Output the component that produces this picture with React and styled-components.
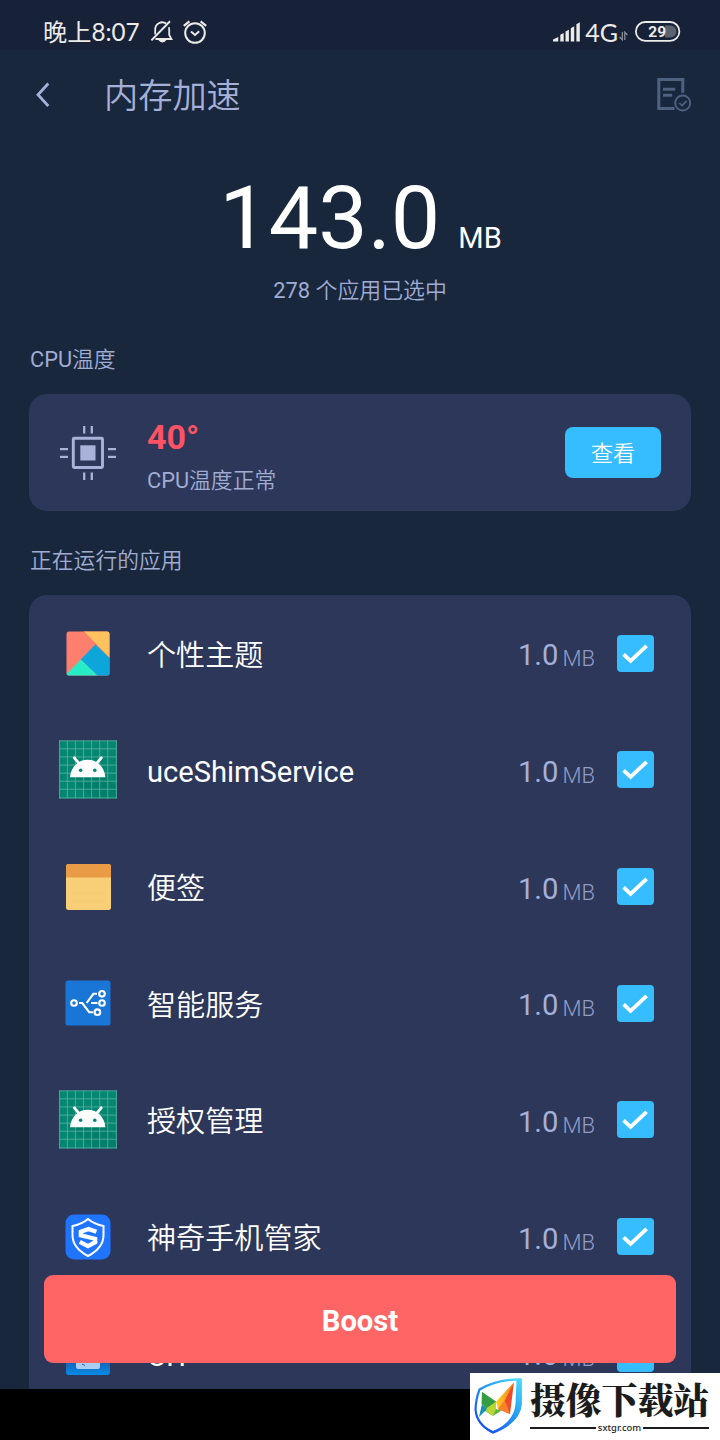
import React from 'react';
import styled, { createGlobalStyle } from 'styled-components';

const GlobalStyle = createGlobalStyle`
  * {
    box-sizing: border-box;
  }

  body {
    margin: 0;
    background: #000;
    font-family: Roboto, 'Noto Sans CJK SC DemiLight', 'Noto Sans CJK SC', sans-serif;
  }

  svg {
    display: block;
  }
`;

const BellOffIcon = () => (
  <svg width="24" height="24" viewBox="0 0 24 24" fill="none" stroke="#ecebe8" strokeWidth="1.8">
    <path d="M5.2 14.5V9.6a7 7 0 0 1 11-6M18.8 7.2c.3.8.4 1.6.4 2.4v5.2l2.2 4.2H5.5" />
    <path d="M20 1.2 1.4 20.4" strokeWidth="2" />
    <path d="M8.4 20h8q-1.4 2.4-4 2.4T8.4 20z" fill="#ecebe8" stroke="none" />
  </svg>
);

const AlarmIcon = () => (
  <svg width="24" height="24" viewBox="0 0 24 24" fill="none" stroke="#ecebe8" strokeWidth="2">
    <circle cx="12" cy="13" r="9.8" />
    <path d="M.8 5.8 6.4 1.4M23.2 5.8 17.6 1.4" strokeWidth="2.2" />
    <path d="M8 11.4 12 15l4.2-3.8" />
  </svg>
);

const SignalIcon = () => (
  <svg width="28" height="20" viewBox="0 0 28 20" fill="#ecebe8">
    <path d="M0 19.5v-2L5.3 15v4.5zM7.3 19.5v-6.7l3.4-1.7v8.4zM12.5 19.5v-10l3.4-1.8v11.8zM17.8 19.5V6.2l3.4-2v15.3zM23.4 19.5V2.2l3.4-2v19.3z" />
  </svg>
);

const DataIcon = () => (
  <svg width="9" height="10" viewBox="0 0 9 10" fill="none" stroke="#8e939d" strokeWidth="1.2">
    <path d="M3.3 1v7.8L.6 6M5.8 9V1.2L8.4 4" />
  </svg>
);

const BatteryIcon = () => (
  <svg width="46" height="21" viewBox="0 0 46 21">
    <path d="M30 4.5h5.5a6 6 0 0 1 0 12H30z" fill="#5b6270" />
    <rect x="0.9" y="1" width="43.5" height="18.8" rx="9.4" fill="none" stroke="#ecebe8" strokeWidth="1.8" />
    <text x="22.2" y="15.9" textAnchor="middle" fontSize="15.5" fontWeight="700" fill="#ecebe8">29</text>
  </svg>
);

const BackIcon = () => (
  <svg width="15" height="26" viewBox="0 0 15 26" fill="none" stroke="#a5b0d8" strokeWidth="2.8">
    <path d="M13.3 1.5 3 12.8 13.3 24" />
  </svg>
);

const ReportIcon = () => (
  <svg width="36" height="36" viewBox="0 0 36 36" fill="none" stroke="#4d6280">
    <path d="M18.5 31.4H2.8V2.4h24v13.4" strokeWidth="3" />
    <path d="M7 12.2h12.2M7 18.2h9.2" strokeWidth="3" />
    <circle cx="26.7" cy="26" r="7.5" strokeWidth="1.9" />
    <path d="m23.4 26 2.7 2.6 4.5-4.7" strokeWidth="1.7" />
  </svg>
);

const CpuIcon = () => (
  <svg width="58" height="58" viewBox="0 0 58 58" fill="none" stroke="#a9b3d9">
    <rect x="14.3" y="14.3" width="29.2" height="29.2" rx="1" strokeWidth="2.9" />
    <rect x="21.3" y="21.3" width="15.2" height="15.2" fill="#a9b3d9" stroke="none" />
    <path
      d="M25.2 2v7.6M32.8 2v7.6M25.2 48.4V56M32.8 48.4V56M1 25.2h8M1 32.8h8M49 25.2h8M49 32.8h8"
      strokeWidth="2.3"
    />
  </svg>
);

const CheckIcon = () => (
  <svg width="37" height="37" viewBox="0 0 37 37" fill="none" stroke="#fff" strokeWidth="3.8">
    <path d="M6.6 19.4 13.6 26 29.6 10.8" />
  </svg>
);

const ThemeIcon = () => (
  <svg width="44" height="45" viewBox="0 0 44 45">
    <clipPath id="theme">
      <rect x="0.5" y="0.5" width="43" height="44" rx="2.5" />
    </clipPath>
    <g clipPath="url(#theme)">
      <path d="M0 0h44v45H0z" fill="#ff7f6e" />
      <path d="M17.5 0H44v27z" fill="#ffc25f" />
      <path d="M29.4 13.4 44 27.5V45H31.6L14.6 28.4z" fill="#0da6da" />
      <path d="M14.8 28.4 32 45H-1.5z" fill="#28ecc7" />
    </g>
  </svg>
);

const gridLines = [0.4, 8.5, 16.7, 25, 33.2, 41.4, 49.6, 58.4];

const AndroidIcon = () => (
  <svg width="59" height="59" viewBox="0 0 59 59">
    <path d="M0 0h59v59H0z" fill="#048671" />
    <path d="M12 37 46.5 36 59 48v11H34z" fill="#037a67" opacity=".6" />
    <path
      d={gridLines.map(n => `M${n} 0v59M0 ${n}h59`).join('')}
      stroke="#6bb9a9"
      strokeWidth="0.9"
      opacity=".8"
    />
    <path d="M11.2 37.4C12 27 19.5 19.6 29.2 19.6S46.3 27 47.2 37.4z" fill="#fff" />
    <path d="m15.6 17.6 5 6M43 17.6l-5 6" stroke="#fff" strokeWidth="2.8" strokeLinecap="round" />
    <circle cx="22" cy="30.2" r="1.8" fill="#048671" />
    <circle cx="36.4" cy="30.2" r="1.8" fill="#048671" />
  </svg>
);

const NotesIcon = () => (
  <svg width="45" height="46" viewBox="0 0 45 46">
    <rect width="45" height="46" rx="2.5" fill="#f8cf76" />
    <path d="M0 13.4V2.5A2.5 2.5 0 0 1 2.5 0h40A2.5 2.5 0 0 1 45 2.5v10.9z" fill="#e99b45" />
    <path d="M6 29h33M6 37h33" stroke="#f1c972" />
  </svg>
);

const ServiceIcon = () => (
  <svg width="46" height="46" viewBox="0 0 46 46" fill="none" stroke="#fff" strokeWidth="2.1">
    <rect x="0.5" y="0.5" width="45" height="45" rx="2.5" fill="#1976d6" stroke="none" />
    <circle cx="9" cy="23" r="2.8" />
    <circle cx="37" cy="13.8" r="2.8" />
    <circle cx="37" cy="23" r="2.8" />
    <circle cx="32.4" cy="32.2" r="2.8" />
    <path d="M14 23h3.2l7 9.2h4M32 13.8h-3.6L21.6 23M26 23h6.5" />
  </svg>
);

const ShieldIcon = () => (
  <svg width="46" height="46" viewBox="0 0 46 46" fill="none">
    <rect x="0.5" y="0.5" width="45" height="45" rx="8.5" fill="#1f75ff" />
    <path
      d="M23 5q6.7 5.5 15.5 7v9.2C38.5 31 31.5 37.5 23 42 14.5 37.5 7.5 31 7.5 21.2V12Q16.3 10.5 23 5z"
      stroke="#fff"
      strokeWidth="2"
    />
    <path
      d="M31.4 17.8 23.5 15 15.8 17.8V21.3L30.2 24.8V28.2L23 32.2 14.8 27.9"
      stroke="#fff"
      strokeWidth="4.2"
    />
  </svg>
);

const CitIcon = () => (
  <svg width="44" height="44" viewBox="0 0 44 44">
    <defs>
      <linearGradient id="cit" x1="0" y1="0" x2="0" y2="1">
        <stop offset=".7" stopColor="#1563b4" />
        <stop offset="1" stopColor="#078ce9" />
      </linearGradient>
    </defs>
    <rect width="44" height="44" rx="3" fill="url(#cit)" />
    <rect x="10" y="8" width="24" height="30" rx="2" fill="#a9cdf0" />
    <path d="m16 33 3 1.5" stroke="#1563b4" />
  </svg>
);

const SiteLogo = () => (
  <svg width="50" height="58" viewBox="0 0 50 58">
    <defs>
      <linearGradient id="rim" x1="1" y1="0" x2="0.1" y2="1">
        <stop offset="0" stopColor="#48dcff" />
        <stop offset=".45" stopColor="#259af5" />
        <stop offset="1" stopColor="#1645f3" />
      </linearGradient>
      <linearGradient id="flame" x1="0" y1="0" x2="1" y2="0">
        <stop offset="0" stopColor="#ffd21e" />
        <stop offset="1" stopColor="#f47a20" />
      </linearGradient>
    </defs>
    <path
      d="M5.5 12.5Q22 2.5 46.5 2.3V27Q45 45 19 55.5 2.5 47 1.6 33 1.5 23 5.5 12.5z"
      fill="#fff"
      stroke="url(#rim)"
      strokeWidth="2.2"
    />
    <path d="M42.5 2.4h5.3V27Q46.5 46 19 56.5 7 51 3 42q6 8.500 16 12 21-9 22.500-27z" fill="url(#rim)" />
    <path d="M8 15 22 24.7 19 39 11 34z" fill="#65b92e" />
    <path d="M8 15 7.5 27 13 31l9-6.3z" fill="#349c42" />
    <path d="M8 27 5 40l8-8z" fill="#178fb5" />
    <path d="m13 31 9-6.3V33l-3 6-7-5z" fill="#b9d637" />
    <path d="M40 5.3 36 37 24 32z" fill="#ee4b2d" />
    <path d="M40 5.3 30 25l-6 7-2-7.3z" fill="url(#flame)" />
    <path d="m31 23.5 5 13.5-12-5z" fill="#f98127" />
    <path d="m19 39 3-7 5.5 1.5z" fill="#5fb434" />
  </svg>
);

const apps = [
  { name: '个性主题', icon: <ThemeIcon /> },
  { name: 'uceShimService', icon: <AndroidIcon /> },
  { name: '便签', icon: <NotesIcon /> },
  { name: '智能服务', icon: <ServiceIcon /> },
  { name: '授权管理', icon: <AndroidIcon /> },
  { name: '神奇手机管家', icon: <ShieldIcon /> },
  { name: 'CIT', icon: <CitIcon /> },
];

const AppRow = ({ name, icon }) => (
  <Row>
    <IconSlot>{icon}</IconSlot>
    <AppName>{name}</AppName>
    <Size>1.0</Size>
    <SizeUnit>MB</SizeUnit>
    <Checkbox>
      <CheckIcon />
    </Checkbox>
  </Row>
);

const App = () => {
  return (
    <Page>
      <GlobalStyle />
      <Screen>
        <StatusBar>
          <Clock>晚上8:07</Clock>
          <BellOffIcon />
          <AlarmWrapper>
            <AlarmIcon />
          </AlarmWrapper>
          <StatusRight>
            <SignalIcon />
            <Network>4G</Network>
            <DataWrapper>
              <DataIcon />
            </DataWrapper>
            <BatteryIcon />
          </StatusRight>
        </StatusBar>

        <Header>
          <BackIcon />
          <Title>内存加速</Title>
          <ReportIcon />
        </Header>

        <Summary>
          <Total>
            <Amount>143.0</Amount>
            <AmountUnit>MB</AmountUnit>
          </Total>
          <Selected>278 个应用已选中</Selected>
        </Summary>

        <SectionTitle>CPU温度</SectionTitle>
        <CpuCard>
          <IconSlot>
            <CpuIcon />
          </IconSlot>
          <CpuInfo>
            <Temperature>40°</Temperature>
            <CpuStatus>CPU温度正常</CpuStatus>
          </CpuInfo>
          <ViewButton>查看</ViewButton>
        </CpuCard>

        <SectionTitle>正在运行的应用</SectionTitle>
        <AppList>
          {apps.map((app, index) => (
            <AppRow key={index} name={app.name} icon={app.icon} />
          ))}
        </AppList>
      </Screen>

      <BoostButton>Boost</BoostButton>

      <Watermark>
        <SiteLogo />
        <SiteText>
          <SiteName>摄像下载站</SiteName>
          <SiteUrl>sxtgr.com</SiteUrl>
        </SiteText>
      </Watermark>
    </Page>
  );
};

const Page = styled.div`
  position: relative;
  width: 720px;
  height: 1440px;
  overflow: hidden;
  background: #000;
`;

const Screen = styled.div`
  height: 1389px;
  overflow: hidden;
  background: #19273d;
`;

const StatusBar = styled.div`
  display: flex;
  align-items: center;
  height: 50px;
  padding: 13px 39px 0 43px;
  background: #172238;
  color: #ecebe8;
`;

const Clock = styled.div`
  width: 107px;
  font-family: Lato, 'Noto Sans CJK SC', sans-serif;
  font-size: 24.2px;
  line-height: 36px;
  white-space: nowrap;
`;

const AlarmWrapper = styled.div`
  margin-left: 9px;
`;

const StatusRight = styled.div`
  display: flex;
  align-items: center;
  margin-left: auto;
`;

const Network = styled.div`
  margin: 0 1px 0 4px;
  font-family: Lato, sans-serif;
  font-size: 25px;
  line-height: 36px;
`;

const DataWrapper = styled.div`
  margin: 9px 7px 0 0;
`;

const Header = styled.div`
  display: flex;
  align-items: center;
  height: 90px;
  padding: 0 28px 0 35px;
`;

const Title = styled.h1`
  flex: 1;
  margin: 2px 0 0 54px;
  color: #a5b0d8;
  font-size: 34.2px;
  font-weight: 400;
  line-height: 50px;
`;

const Summary = styled.div`
  display: flex;
  flex-direction: column;
  align-items: center;
  height: 204px;
  padding-top: 26px;
`;

const Total = styled.div`
  display: flex;
  align-items: baseline;
  height: 104px;
  padding-left: 1px;
  color: #fff;
  line-height: 104px;
`;

const Amount = styled.span`
  font-size: 88px;
`;

const AmountUnit = styled.span`
  margin-left: 18px;
  font-size: 29px;
`;

const Selected = styled.div`
  margin-top: 5px;
  color: #a0acd5;
  font-size: 21.9px;
  line-height: 32px;
`;

const SectionTitle = styled.h2`
  margin: 0;
  padding-left: 30px;
  color: #a0acd2;
  font-size: 21.8px;
  font-weight: 400;
  line-height: 32px;
`;

const Card = styled.div`
  margin: 0 29px;
  border-radius: 18px;
  background: #2c375a;
`;

const CpuCard = styled(Card)`
  display: flex;
  align-items: center;
  height: 117px;
  margin-top: 18px;
  margin-bottom: 34px;
  padding: 0 30px;
`;

const IconSlot = styled.div`
  display: flex;
  justify-content: center;
  width: 58px;
`;

const CpuInfo = styled.div`
  flex: 1;
  margin: 8px 0 0 30px;
`;

const Temperature = styled.div`
  color: #ff5264;
  font-size: 34px;
  font-weight: 700;
  line-height: 40px;
`;

const CpuStatus = styled.div`
  margin-top: 8px;
  color: #a0acd2;
  font-size: 21.8px;
  line-height: 32px;
`;

const ViewButton = styled.button`
  width: 96px;
  height: 51px;
  padding: 0 0 4px;
  border: 0;
  border-radius: 8px;
  background: #36bdff;
  color: #fff;
  font-family: inherit;
  font-size: 22px;
`;

const AppList = styled(Card)`
  margin-top: 18px;
`;

const Row = styled.div`
  display: flex;
  align-items: center;
  height: 116.67px;
  padding: 0 37px 0 30px;
`;

const AppName = styled.div`
  flex: 1;
  margin: 5px 0 0 30px;
  color: #fff;
  font-size: 29.1px;
  line-height: 42px;
`;

const Size = styled.div`
  margin-top: 4px;
  color: #a5b0d8;
  font-size: 29.2px;
`;

const SizeUnit = styled.div`
  margin: 11px 22px 0 4px;
  color: #929dc5;
  font-size: 22px;
  font-weight: 300;
`;

const Checkbox = styled.div`
  overflow: hidden;
  border-radius: 4px;
  background: #36bdff;
`;

// floats over the scrolled list
const BoostButton = styled.button`
  position: absolute;
  bottom: 77px;
  left: 44px;
  width: 632px;
  height: 88px;
  padding: 3px 0 0;
  border: 0;
  border-radius: 9px;
  background: #ff6565;
  color: #fff;
  font-family: inherit;
  font-size: 29.2px;
  font-weight: 700;
`;

const Watermark = styled.div`
  position: absolute;
  right: 0;
  bottom: 0;
  display: flex;
  width: 250px;
  height: 67px;
  padding: 4px 0 0 4px;
  background: #fff;
`;

const SiteText = styled.div`
  width: 179px;
  margin-left: 6px;
  color: #1c1c1c;
`;

const SiteName = styled.div`
  font-family: 'Noto Serif CJK SC', 'Noto Sans CJK SC', serif;
  font-size: 35.8px;
  font-weight: 900;
  line-height: 44px;
  white-space: nowrap;
`;

const SiteUrl = styled.div`
  display: flex;
  align-items: center;
  gap: 2px;
  font-family: 'Noto Sans', sans-serif;
  font-size: 9.4px;
  font-weight: 500;
  line-height: 14px;

  &::before,
  &::after {
    content: '';
    flex: 1;
    height: 2px;
    background: #1c1c1c;
  }
`;

export default App;
